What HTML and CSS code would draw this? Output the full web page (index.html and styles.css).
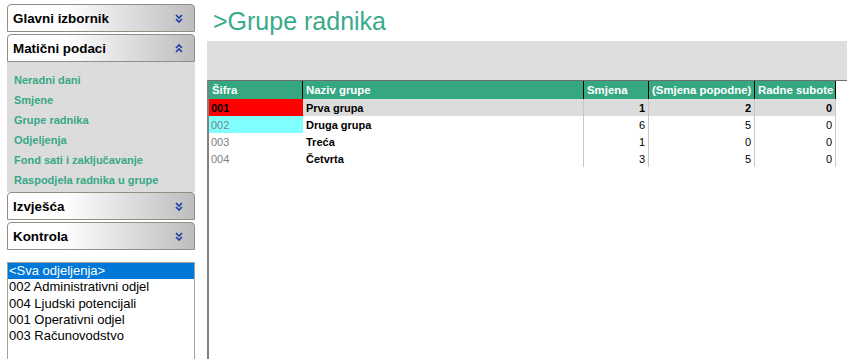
FILE: index.html
```html
<!doctype html>
<html lang="hr">
  <head>
    <meta charset="UTF-8" />
    <meta name="viewport" content="width=device-width, initial-scale=1.0" />
    <title>Grupe radnika</title>
    <link rel="stylesheet" href="styles.css">
  </head>

  <body>
    <div class="page">
      <aside class="sidebar">
        <div class="acc-head">
          <span>Glavni izbornik</span>
          <svg class="chev" width="8" height="9" viewBox="0 0 8 9"><path d="M1 1 4 4 7 1M1 5 4 8 7 5" /></svg>
        </div>
        <div class="acc-head">
          <span>Matični podaci</span>
          <svg class="chev" width="8" height="9" viewBox="0 0 8 9"><path d="M1 4 4 1 7 4M1 8 4 5 7 8" /></svg>
        </div>
        <ul class="acc-body">
          <li><a href="#">Neradni dani</a></li>
          <li><a href="#">Smjene</a></li>
          <li><a href="#">Grupe radnika</a></li>
          <li><a href="#">Odjeljenja</a></li>
          <li><a href="#">Fond sati i zaključavanje</a></li>
          <li><a href="#">Raspodjela radnika u grupe</a></li>
        </ul>
        <div class="acc-head">
          <span>Izvješća</span>
          <svg class="chev" width="8" height="9" viewBox="0 0 8 9"><path d="M1 1 4 4 7 1M1 5 4 8 7 5" /></svg>
        </div>
        <div class="acc-head">
          <span>Kontrola</span>
          <svg class="chev" width="8" height="9" viewBox="0 0 8 9"><path d="M1 1 4 4 7 1M1 5 4 8 7 5" /></svg>
        </div>

        <ul class="dept-list">
          <li class="selected">&lt;Sva odjeljenja&gt;</li>
          <li>002 Administrativni odjel</li>
          <li>004 Ljudski potencijali</li>
          <li>001 Operativni odjel</li>
          <li>003 Računovodstvo</li>
        </ul>
      </aside>

      <main class="content">
        <h1 class="page-title">&gt;Grupe radnika</h1>
        <div class="toolbar"></div>
        <div class="grid-wrap">
          <table class="grid">
            <colgroup>
              <col class="c-code" />
              <col class="c-name" />
              <col class="c-shift" />
              <col class="c-pm" />
              <col class="c-sat" />
            </colgroup>
            <thead>
              <tr>
                <th>Šifra</th>
                <th>Naziv grupe</th>
                <th>Smjena</th>
                <th>(Smjena popodne)</th>
                <th>Radne subote</th>
              </tr>
            </thead>
            <tbody>
              <tr class="current">
                <td class="code red">001</td>
                <td class="name">Prva grupa</td>
                <td class="num">1</td>
                <td class="num">2</td>
                <td class="num">0</td>
              </tr>
              <tr>
                <td class="code cyan">002</td>
                <td class="name">Druga grupa</td>
                <td class="num">6</td>
                <td class="num">5</td>
                <td class="num">0</td>
              </tr>
              <tr>
                <td class="code">003</td>
                <td class="name">Treća</td>
                <td class="num">1</td>
                <td class="num">0</td>
                <td class="num">0</td>
              </tr>
              <tr>
                <td class="code">004</td>
                <td class="name">Četvrta</td>
                <td class="num">3</td>
                <td class="num">5</td>
                <td class="num">0</td>
              </tr>
            </tbody>
          </table>
        </div>
      </main>
    </div>
  </body>
</html>
```

FILE: styles.css
```css
html,
body {
  height: 100%;
}

body {
  margin: 0;
  font-family: "Liberation Sans", Arial, sans-serif;
  background: #fff;
  color: #000;
  overflow: hidden;
}

.page {
  display: flex;
  height: 100%;
  gap: 12px;
  padding-left: 7px;
  box-sizing: border-box;
}

/* left menu */
.sidebar {
  width: 188px;
  flex: none;
  padding-top: 4px;
}

.acc-head {
  display: flex;
  align-items: center;
  justify-content: space-between;
  height: 26px;
  padding: 0 11px 0 5px;
  margin-bottom: 2px;
  border: 1px solid #8f8f82;
  border-radius: 4px 4px 0 0;
  background: linear-gradient(to right, #fff 30%, #bdbdbd);
  font-size: 13.4px;
  font-weight: bold;

  & .chev {
    fill: none;
    stroke: #1d3fa6;
    stroke-width: 1.7;
  }
}

.acc-body {
  list-style: none;
  margin: -2px 0 0;
  padding: 7px 0 3px 7px;
  background: #dcdcdc;

  & li {
    height: 20px;
    line-height: 20px;
  }

  & a {
    color: #36a886;
    font-size: 11px;
    font-weight: bold;
    text-decoration: none;
  }
}

.dept-list {
  list-style: none;
  margin: 12px 0 0;
  padding: 0;
  height: 140px;
  border: 1px solid #a0a0a0;
  font-size: 13px;

  & li {
    height: 16.3px;
    line-height: 16px;
    padding-left: 1px;
    white-space: nowrap;
  }

  & .selected {
    background: #0078d7;
    color: #fff;
  }
}

/* main area */
.content {
  flex: 1;
  display: flex;
  flex-direction: column;
  min-width: 0;
}

.page-title {
  margin: 7px 0 6px 6px;
  font-size: 25px;
  font-weight: normal;
  line-height: 28px;
  color: #3aaa8a;
}

.toolbar {
  height: 39px;
  background: #dedede;
}

.grid-wrap {
  flex: 1;
  border-top: 1px solid #6f6f6f;
  border-left: 2px solid #808080;
}

.grid {
  table-layout: fixed;
  border-collapse: separate;
  border-spacing: 0;
  width: 627px;
  font-size: 11px;

  & .c-code { width: 94px; }
  & .c-name { width: 281px; }
  & .c-shift { width: 65px; }
  & .c-pm { width: 106px; }
  & .c-sat { width: 81px; }

  & th,
  & td {
    box-sizing: border-box;
    padding: 0 3px;
    white-space: nowrap;
    overflow: hidden;
  }

  & th {
    height: 18px;
    padding: 0 2px 0 3px;
    background: #35a882;
    color: #fff;
    font-size: 11.4px;
    text-align: left;
    border-right: 1px solid #000;
  }

  & td {
    height: 17px;
    border-right: 1px solid #c8c8c8;
  }

  & td.code {
    padding-left: 2px;
    color: #808080;
    border-right-color: transparent;
  }

  & td.name {
    font-weight: bold;
  }

  & td.num {
    text-align: right;
  }

  & .current td {
    background: #dcdcdc;
    font-weight: bold;
  }

  & .current td.code {
    color: #000;
  }

  & td.red {
    background: #ff0000 !important;
  }

  & td.cyan {
    background: #80ffff;
  }
}
```
